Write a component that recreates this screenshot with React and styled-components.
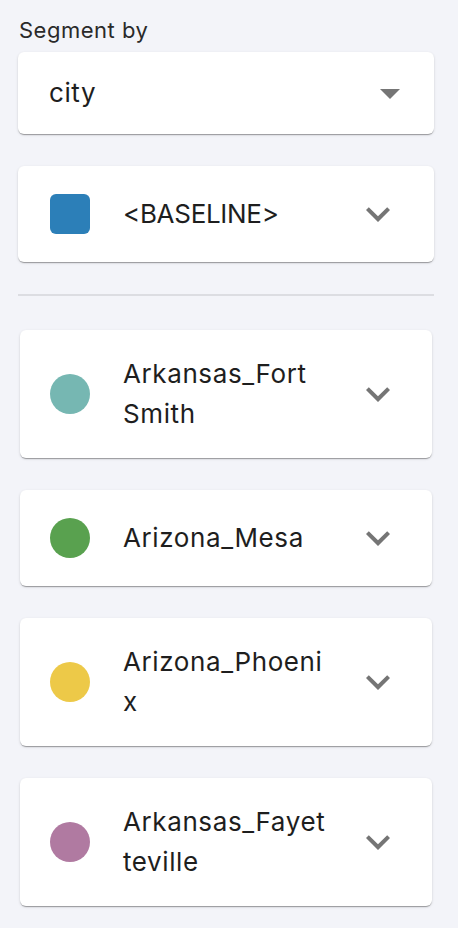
import React from "react";
import styled, { createGlobalStyle } from "styled-components";

const GlobalStyle = createGlobalStyle`
  html, body {
    margin: 0;
    padding: 0;
    background: #f3f4f9;
  }
  body {
    font-family: Inter, "Noto Sans", "Liberation Sans", sans-serif;
    color: #1e1e1e;
    -webkit-font-smoothing: antialiased;
  }
`;

const Panel = styled.div`
  box-sizing: border-box;
  width: 458px;
  min-height: 928px;
  padding: 16px 24px 0 18px;
  background: #f3f4f9;
`;

const Label = styled.div`
  font-size: 22px;
  line-height: 28px;
  letter-spacing: 0.5px;
  color: #2a2a2a;
  padding-left: 1px;
  margin-bottom: 8px;
`;

const Card = styled.div`
  box-sizing: border-box;
  background: #ffffff;
  border-radius: 6px;
  box-shadow: 0px 2px 1px -1px rgba(0, 0, 0, 0.2),
    0px 1px 1px 0px rgba(0, 0, 0, 0.14), 0px 1px 3px 0px rgba(0, 0, 0, 0.12);
  display: flex;
  align-items: center;
`;

const SelectBox = styled(Card)`
  height: 82px;
  padding: 0 20px 0 31px;
  justify-content: space-between;
`;

const SelectValue = styled.span`
  font-size: 26px;
  line-height: 32px;
  letter-spacing: 0.6px;
  color: #1e1e1e;
`;

const SegmentCard = styled(Card)`
  margin: ${(p) => (p.$inset ? "0 2px" : "0")};
  padding: 24px ${(p) => (p.$inset ? "30px" : "32px")};
  min-height: 96px;
`;

const Swatch = styled.div`
  flex: 0 0 40px;
  width: 40px;
  height: 40px;
  border-radius: ${(p) => (p.$round ? "50%" : "6px")};
  background: ${(p) => p.$color};
`;

const Name = styled.div`
  flex: 1;
  min-width: 0;
  margin: 0 24px 0 33px;
  font-size: 26px;
  line-height: 40px;
  letter-spacing: ${(p) => (p.$caps ? "-0.3px" : "0.6px")};
  color: #1e1e1e;
  overflow-wrap: anywhere;
`;

const IconBox = styled.div`
  flex: 0 0 48px;
  width: 48px;
  height: 48px;
  display: flex;
  align-items: center;
  justify-content: center;
`;

const Stack = styled.div`
  display: flex;
  flex-direction: column;
  gap: 32px;
`;

const Divider = styled.div`
  height: 2px;
  background: #dcdde2;
  margin: 32px 0 34px;
`;

const ArrowDropDown = () => (
  <IconBox>
    <svg width="48" height="48" viewBox="0 0 24 24" fill="#757575">
      <path d="M7 10l5 5 5-5z" />
    </svg>
  </IconBox>
);

const ExpandMore = () => (
  <IconBox>
    <svg width="48" height="48" viewBox="0 0 24 24" fill="#757575">
      <path d="M16.59 8.59 12 13.17 7.41 8.59 6 10l6 6 6-6z" />
    </svg>
  </IconBox>
);

const segments = [
  { name: "Arkansas_Fort Smith", color: "#76b7b2" },
  { name: "Arizona_Mesa", color: "#59a14f" },
  { name: "Arizona_Phoenix", color: "#edc948" },
  { name: "Arkansas_Fayetteville", color: "#b07aa1" },
];

export default function App() {
  return (
    <>
      <GlobalStyle />
      <Panel>
        <Label>Segment by</Label>
        <Stack>
          <SelectBox>
            <SelectValue>city</SelectValue>
            <ArrowDropDown />
          </SelectBox>
          <SegmentCard>
            <Swatch $color="#2c7fb8" />
            <Name $caps>&lt;BASELINE&gt;</Name>
            <ExpandMore />
          </SegmentCard>
        </Stack>
        <Divider />
        <Stack>
          {segments.map((s) => (
            <SegmentCard key={s.name} $inset>
              <Swatch $round $color={s.color} />
              <Name>{s.name}</Name>
              <ExpandMore />
            </SegmentCard>
          ))}
        </Stack>
      </Panel>
    </>
  );
}
